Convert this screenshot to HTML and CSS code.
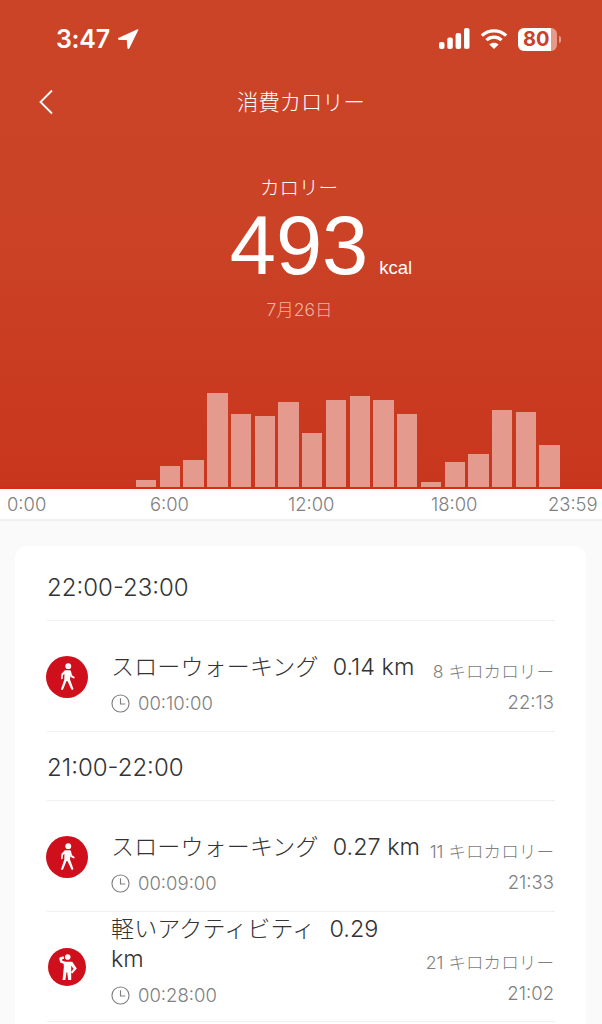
FILE: index.html
```html
<!DOCTYPE html>
<html lang="ja">
<head>
<meta charset="utf-8">
<title>消費カロリー</title>
<link rel="stylesheet" href="styles.css">
</head>
<body>
<div class="page">
  <header class="hero">
    <div class="status">
      <div class="status-left">
        <span class="clock">3:47</span>
        <svg class="loc" viewBox="0 0 22 22" width="22" height="22"><path d="M20.600 1.200 1.800 9.800c-1.300.6-.9 2.100.4 2.100l7.600.2.6 7.900c.1 1.200 1.500 1.400 2 .3l8.900-18.300c.3-.6-.2-1-.7-.8z" fill="#fff"/></svg>
      </div>
      <div class="status-right">
        <svg class="signal" viewBox="0 0 31 22" width="31" height="22"><g fill="#fff"><rect x="0" y="14" width="5.500" height="7" rx="2"/><rect x="8.300" y="9.500" width="5.500" height="11.500" rx="2"/><rect x="16.600" y="5" width="5.500" height="16" rx="2"/><rect x="25" y="0" width="5.500" height="21" rx="2"/></g></svg>
        <svg class="wifi" viewBox="0 0 28 22" width="28" height="22"><g fill="none" stroke="#fff" stroke-width="3.200"><path d="M1.800 7.600C8.600 1.200 19.400 1.200 26.200 7.600"/><path d="M6.400 12.200c4.300-4 10.900-4 15.200 0"/></g><path d="m14 21-4.600-4.600c2.600-2.200 6.600-2.200 9.200 0z" fill="#fff"/></svg>
        <div class="battery"><span class="battery-num">80</span><span class="battery-cap"></span></div>
      </div>
    </div>
    <nav class="nav">
      <svg class="back" viewBox="0 0 16 26" width="16" height="26"><path d="M14 1.500 2.500 13 14 24.500" fill="none" stroke="#fff" stroke-width="1.800"/></svg>
      <h1 class="title">消費カロリー</h1>
    </nav>
    <div class="summary">
      <div class="label">カロリー</div>
      <div class="value"><span class="big">493</span><span class="unit">kcal</span></div>
      <div class="date">7月26日</div>
    </div>
    <div class="chart">
      <div class="bar" style="height:7px"></div>
      <div class="bar" style="height:21px"></div>
      <div class="bar" style="height:27px"></div>
      <div class="bar" style="height:94px"></div>
      <div class="bar" style="height:73px"></div>
      <div class="bar" style="height:71px"></div>
      <div class="bar" style="height:85px"></div>
      <div class="bar" style="height:54px"></div>
      <div class="bar" style="height:87px"></div>
      <div class="bar" style="height:91px"></div>
      <div class="bar" style="height:87px"></div>
      <div class="bar" style="height:73px"></div>
      <div class="bar" style="height:5px"></div>
      <div class="bar" style="height:25px"></div>
      <div class="bar" style="height:33px"></div>
      <div class="bar" style="height:77px"></div>
      <div class="bar" style="height:75px"></div>
      <div class="bar" style="height:42px"></div>
    </div>
  </header>
  <div class="axis"><span>0:00</span><span>6:00</span><span>12:00</span><span>18:00</span><span>23:59</span></div>
  <main class="content">
    <section class="card">
      <h2 class="hour">22:00-23:00</h2>
      <div class="row">
        <span class="badge"><svg viewBox="0 0 24 24" width="28" height="28"><use href="#walk"/></svg></span>
        <div class="main">
          <div class="name">スローウォーキング<span class="dist">0.14 km</span></div>
          <div class="dur"><svg class="clk" viewBox="0 0 20 20" width="19" height="19"><use href="#clock"/></svg>00:10:00</div>
        </div>
        <div class="side"><span class="kcal">8 キロカロリー</span><span class="at">22:13</span></div>
      </div>
      <h2 class="hour">21:00-22:00</h2>
      <div class="row">
        <span class="badge"><svg viewBox="0 0 24 24" width="28" height="28"><use href="#walk"/></svg></span>
        <div class="main">
          <div class="name">スローウォーキング<span class="dist">0.27 km</span></div>
          <div class="dur"><svg class="clk" viewBox="0 0 20 20" width="19" height="19"><use href="#clock"/></svg>00:09:00</div>
        </div>
        <div class="side"><span class="kcal">11 キロカロリー</span><span class="at">21:33</span></div>
      </div>
      <div class="row row-tall">
        <span class="badge badge-sm"><svg viewBox="0 0 24 24" width="28" height="28"><use href="#pose"/></svg></span>
        <div class="main">
          <div class="name name-wrap">軽いアクティビティ<span class="dist">0.29</span> <span class="dist dist-wrapped">km</span></div>
          <div class="dur"><svg class="clk" viewBox="0 0 20 20" width="19" height="19"><use href="#clock"/></svg>00:28:00</div>
        </div>
        <div class="side"><span class="kcal">21 キロカロリー</span><span class="at">21:02</span></div>
      </div>
    </section>
  </main>
</div>
<svg class="defs" width="0" height="0">
  <defs>
    <symbol id="walk" viewBox="0 0 24 24"><circle cx="13.100" cy="2.700" r="2.500" fill="#fff"/><path d="M10.200 6.200h3.800c.8 0 1.300.4 1.500 1l.8 3.300 1.900 1.300c.8.600.2 1.700-.7 1.300l-2.300-1.200v-1.600l-.7 3.600 2.900 8c.3 1.100-1.200 1.500-1.700.6l-3.300-7-.8 0-2.900 7.100c-.5 1-2 .6-1.700-.5l2.700-8 .1-4.800-1.300 1.200-.2 2.700c-.2 1-1.400.8-1.400-.2l.4-3.700z" fill="#fff"/></symbol>
    <symbol id="pose" viewBox="0 0 24 24"><circle cx="12.600" cy="3.400" r="2.400" fill="#fff"/><path d="M9.300 3.800 6.500 4.600 7.100 7.400 10 8.500" fill="none" stroke="#fff" stroke-width="2.200" stroke-linejoin="round"/><path d="M9 7.600h7.500l3.900 5.600-3.800 4.400-1.200-1.200 2.200-3-2 -2.400v12.200H13L12.200 16.400h-.6L10.600 23.200H8.200L9.300 12z" fill="#fff"/></symbol>
    <symbol id="clock" viewBox="0 0 20 20"><circle cx="10" cy="10" r="9" fill="none" stroke="#808080" stroke-width="1.200"/><path d="M10 4.500V10.500H15" fill="none" stroke="#808080" stroke-width="1.200"/></symbol>
  </defs>
</svg>
</body>
</html>
```
FILE: styles.css
```css
* { box-sizing: border-box; }
html, body { margin: 0; padding: 0; }
body {
  width: 602px;
  height: 1024px;
  overflow: hidden;
  background: #fafafa;
  font-family: "Inter", "Noto Sans CJK JP", sans-serif;
  color: #333;
}
.page { display: flex; flex-direction: column; height: 1024px; overflow: hidden; }
.hero {
  height: 489px;
  flex: none;
  background: linear-gradient(#cb4428 0, #cb4327 45%, #c8361d 100%);
  border-bottom: 2px solid #d92a1c;
  color: #fff;
  display: flex;
  flex-direction: column;
}
.status {
  display: flex;
  justify-content: space-between;
  align-items: center;
  height: 24px;
  margin-top: 27px;
  padding: 0 45px 0 56px;
}
.status-left { display: flex; align-items: center; gap: 7px; }
.clock { font-family: "Inter", sans-serif; font-weight: 600; font-size: 25px; letter-spacing: -.3px; line-height: 24px; }
.status-right { display: flex; align-items: center; gap: 10px; }
.battery {
  position: relative;
  width: 39px;
  height: 23px;
  border-radius: 6px;
  background: linear-gradient(90deg, #fff 0 84%, #e59a87 84%);
  color: #c9412a;
  font-family: "Inter", sans-serif;
  font-weight: 700;
  font-size: 20px;
  line-height: 23px;
  padding-left: 5px;
}
.battery-cap {
  position: absolute;
  right: -4px;
  top: 8px;
  width: 2px;
  height: 7px;
  border-radius: 0 2px 2px 0;
  background: #e59a87;
}
.nav {
  position: relative;
  height: 30px;
  margin-top: 35px;
  display: flex;
  align-items: center;
  justify-content: center;
}
.back { position: absolute; left: 38px; top: 3px; }
.title { margin: 0; font-size: 21.300px; font-weight: 300; line-height: 30px; letter-spacing: 0; font-family: "Noto Sans CJK JP", sans-serif; }
.summary { display: flex; flex-direction: column; align-items: center; margin-top: 68px; }
.label { font-family: "Noto Sans CJK JP", sans-serif; font-size: 19.500px; font-weight: 300; line-height: 28px; margin-top: -11px; margin-right: 4px; }
.value { display: flex; align-items: baseline; height: 78px; margin-left: 40px; margin-top: 7px; }
.big { font-family: "Liberation Sans", sans-serif; font-size: 83px; line-height: 76px; }
.unit { font-family: "Liberation Sans", sans-serif; font-size: 18.500px; margin-left: 11px; }
.date { font-size: 17.500px; color: #eeb3a3; line-height: 24px; margin-top: 12px; margin-right: 3px; font-family: "Inter", "Noto Sans CJK JP", sans-serif; font-weight: 300; }
.chart {
  flex: 1;
  display: flex;
  align-items: flex-end;
  gap: 3.450px;
  padding-left: 136px;
}
.bar { width: 20.300px; background: #e49b8e; flex: none; }
.axis {
  height: 32px;
  flex: none;
  background: #fff;
  border-bottom: 2px solid #f0f0f0;
  display: grid;
  grid-template-columns: 143px 138px 143px 117px auto;
  padding: 2px 0 0 7px;
  font-size: 18.400px;
  font-weight: 300;
  color: #808080;
  line-height: 27px;
}
.content { padding: 25px 16px 0 15px; flex: 1; min-height: 0; }
.card { background: #fff; border-radius: 12px; padding: 0 31px 0 32px; height: 600px; }
.hour {
  margin: 0;
  height: 75px;
  padding-top: 23px;
  border-bottom: 1px solid #f0f0f0;
  font-size: 24px;
  font-weight: 300;
  line-height: 38px;
  color: #333;
}
.row + .hour { height: 69px; padding-top: 17px; }
.row {
  display: flex;
  align-items: center;
  height: 111px;
  border-bottom: 1px solid #f0f0f0;
}
.row-tall { height: 110px; }
.badge {
  flex: none;
  width: 42px;
  height: 42px;
  margin: 2px 23px 0 -1px;
  border-radius: 50%;
  background: #d00f1c;
  display: flex;
  align-items: center;
  justify-content: center;
}
.badge-sm { width: 38px; height: 38px; margin: 0 25px 0 1px; }
.main { width: 318px; flex: none; align-self: flex-start; padding-top: 29px; }
.row-tall .main { padding-top: 0; }
.name { font-family: "Noto Sans CJK JP", sans-serif; font-size: 23px; font-weight: 300; line-height: 30px; color: #333; letter-spacing: .15px; }
.name-wrap { width: 270px; }
.dist { margin-left: 14px; font-family: "Inter", sans-serif; font-size: 23.400px; font-weight: 300; line-height: 1; letter-spacing: 0; }
.dist-wrapped { margin-left: 0; }
.dur { display: flex; align-items: center; gap: 8px; margin-top: 11px; font-size: 18.500px; font-weight: 300; color: #808080; line-height: 24px; }
.side { flex: 1; align-self: flex-start; padding-top: 40px; display: flex; flex-direction: column; align-items: flex-end; gap: 10px; min-width: 0; white-space: nowrap; font-size: 17.600px; font-weight: 300; color: #808080; line-height: 21px; margin-right: 1px; }
.at { font-size: 18.500px; }
.defs { position: absolute; }
```
